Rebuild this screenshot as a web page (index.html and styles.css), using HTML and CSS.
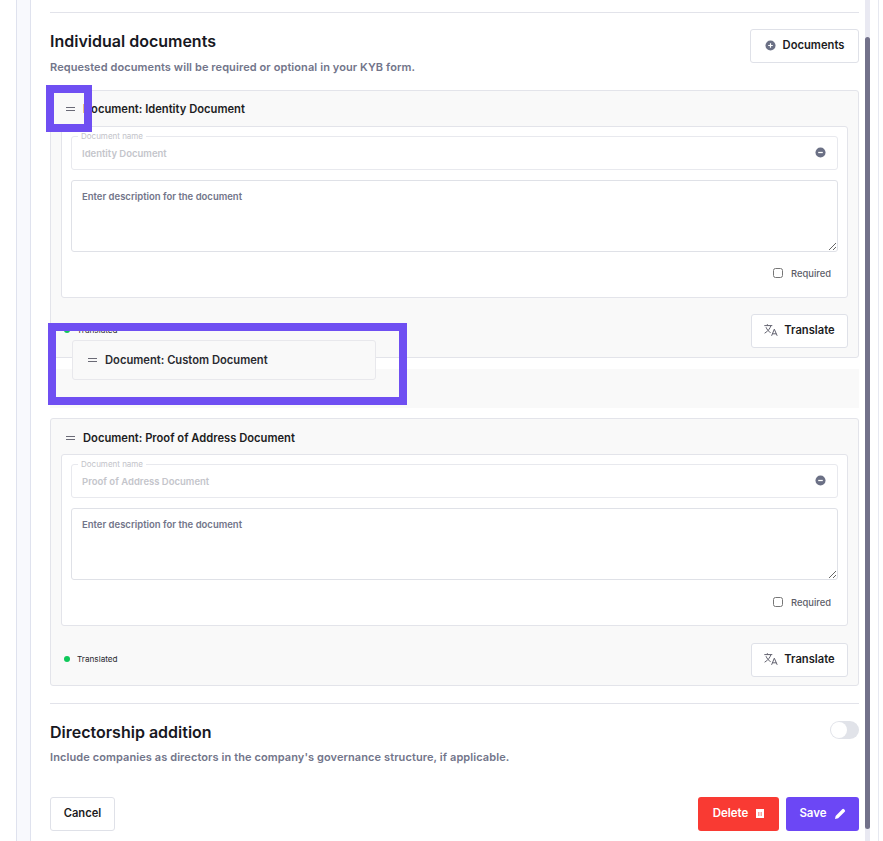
FILE: index.html
```html
<!DOCTYPE html>
<html lang="en">
<head>
<meta charset="utf-8">
<title>Individual documents</title>
<link rel="stylesheet" href="styles.css">
</head>
<body>
<svg class="defs" width="0" height="0" aria-hidden="true">
  <symbol id="i-drag" viewBox="0 0 9 4"><path d="M0 .5h9M0 3.5h9" fill="none" stroke="#6a6a76" stroke-width="1"/></symbol>
  <symbol id="i-minus" viewBox="0 0 12 12"><circle cx="6" cy="6" r="5.5" fill="#6b7085"/><path d="M3.5 6h5" stroke="#fff" stroke-width="1.4"/></symbol>
  <symbol id="i-plus" viewBox="0 0 12 12"><circle cx="6" cy="6" r="5.5" fill="#6b7085"/><path d="M3.5 6h5M6 3.5v5" stroke="#fff" stroke-width="1.3"/></symbol>
  <symbol id="i-translate" viewBox="0 0 14 12"><path d="M.3 1.6h8M3.2 .2l.7 1.4M6.9 1.6C6.3 4.4 3.6 7.6.6 9.2M2 3.2c.9 2.4 2.8 4.4 4.6 5.4" fill="none" stroke="#62626f" stroke-width="1"/><path d="M7.6 11.8 10.3 5.2l2.9 6.6M8.5 9.8h3.8" fill="none" stroke="#62626f" stroke-width="1"/></symbol>
</svg>
<div class="shell">
  <main class="panel">
    <hr class="rule rule-top">
    <section class="head">
      <div>
        <h2 class="title">Individual documents</h2>
        <p class="desc">Requested documents will be required or optional in your KYB form.</p>
      </div>
      <button class="btn btn-docs"><svg class="ico12"><use href="#i-plus"/></svg>Documents</button>
    </section>

    <article class="card">
      <header class="card-head"><svg class="drag"><use href="#i-drag"/></svg><span>Document: Identity Document</span></header>
      <div class="card-body">
        <div class="field">
          <span class="legend">Document name</span>
          <input class="name" value="Identity Document" disabled>
          <svg class="ico12 minus"><use href="#i-minus"/></svg>
        </div>
        <textarea class="note" placeholder="Enter description for the document"></textarea>
        <label class="req"><input type="checkbox" class="check">Required</label>
      </div>
      <footer class="card-foot">
        <span class="status"><i class="dot"></i>Translated</span>
        <button class="btn btn-tr"><svg class="ico-tr"><use href="#i-translate"/></svg>Translate</button>
      </footer>
    </article>

    <div class="slot"></div>

    <article class="card">
      <header class="card-head"><svg class="drag"><use href="#i-drag"/></svg><span>Document: Proof of Address Document</span></header>
      <div class="card-body">
        <div class="field">
          <span class="legend">Document name</span>
          <input class="name" value="Proof of Address Document" disabled>
          <svg class="ico12 minus"><use href="#i-minus"/></svg>
        </div>
        <textarea class="note" placeholder="Enter description for the document"></textarea>
        <label class="req"><input type="checkbox" class="check">Required</label>
      </div>
      <footer class="card-foot">
        <span class="status"><i class="dot"></i>Translated</span>
        <button class="btn btn-tr"><svg class="ico-tr"><use href="#i-translate"/></svg>Translate</button>
      </footer>
    </article>

    <hr class="rule rule-mid">

    <section class="head head-dir">
      <div>
        <h2 class="title">Directorship addition</h2>
        <p class="desc">Include companies as directors in the company's governance structure, if applicable.</p>
      </div>
      <span class="toggle"><i class="knob"></i></span>
    </section>

    <div class="actions">
      <button class="btn btn-cancel">Cancel</button>
      <div class="actions-right">
        <button class="btn btn-solid btn-del">Delete
          <svg class="ico-del" viewBox="0 0 8 9"><rect width="8" height="9" fill="#fff"/><rect x="2" y="3" width="1.5" height="4" fill="#f9a29e"/><rect x="4.5" y="3" width="1.5" height="4" fill="#f9a29e"/></svg>
        </button>
        <button class="btn btn-solid btn-save">Save
          <svg class="ico-pen" viewBox="0 0 12 12"><path d="M0 12l.7-3.4L7.9 1.4a1.4 1.4 0 0 1 2 0l.7.7a1.4 1.4 0 0 1 0 2L3.4 11.3z" fill="#fff"/></svg>
        </button>
      </div>
    </div>
  </main>
</div>

<div class="scroll-track"><div class="scroll-thumb"></div></div>

<div class="drag-item"><svg class="drag"><use href="#i-drag"/></svg><span>Document: Custom Document</span></div>
<div class="mark mark-handle"></div>
<div class="mark mark-item"></div>
</body>
</html>
```
FILE: styles.css
```css
* { box-sizing: border-box; }
html, body { margin: 0; height: 841px; overflow: hidden; background: #fff; }
body { font-family: Inter, "Liberation Sans", sans-serif; color: #1c1c22; }
.defs { position: absolute; }

.shell {
  margin-left: 16px;
  width: 863px;
  height: 841px;
  padding-left: 13px;
  background: #f8f9fd;
  border-left: 1px solid #dfe2ee;
  border-right: 1px solid #e6e8f0;
}
.panel {
  height: 841px;
  padding: 12px 0 0 19px;
  width: 848px;
  background: #fff;
  border-left: 1px solid #dfe2ee;
}
.panel > * { width: 809px; }

.rule { margin: 0; border: 0; border-top: 1px solid #e2e3ea; }

.head { display: flex; justify-content: space-between; align-items: flex-start; margin-top: 16px; }
.title { margin: 0; font-size: 16px; line-height: 24px; font-weight: 600; color: #18181f; }
.desc { margin: 6px 0 0; font-size: 11px; line-height: 16px; font-weight: 600; color: #72758a; letter-spacing: .09px; }

.btn {
  display: inline-flex; align-items: center; justify-content: center;
  font-family: inherit; font-weight: 600; font-size: 11.2px;
  background: #fff; color: #1c1c22;
  border: 1px solid #dfe1e8; border-radius: 3px; padding: 0 0 2px;
}
.btn-docs { width: 109px; height: 34px; gap: 7px; }
.ico12 { width: 11px; height: 11px; }

.card {
  height: 268px;
  padding: 0 10px 0 10px;
  background: #f9f9f9;
  border: 1px solid #e3e4ea;
  border-radius: 3px;
}
.head + .card { margin-top: 15px; }
.card-head {
  display: flex; align-items: center; gap: 8px;
  height: 35px; padding: 1px 5px 0 5px;
  font-size: 11.2px; font-weight: 600; color: #1c1c22;
}
.drag { width: 9px; height: 4px; margin-bottom: 1px; }

.card-body {
  height: 172px;
  padding: 9px 9px 0;
  background: #fff;
  border: 1px solid #e3e4ea;
  border-radius: 3px;
}
.field { position: relative; height: 34px; }
.legend {
  position: absolute; left: 7px; top: -5px; padding: 0 3px;
  font-size: 8px; line-height: 11px; color: #c2c3c9; background: #fff;
}
.name {
  display: block; width: 100%; height: 34px; padding: 0 10px;
  font-family: inherit; font-size: 9.5px; font-weight: 600; color: #c4c5cb;
  background: #fff; border: 1px solid #e8e9ee; border-radius: 3px;
  -webkit-text-fill-color: #c4c5cb; opacity: 1;
}
.minus { position: absolute; right: 12px; top: 11px; }
.note {
  display: block; width: 100%; height: 72px; margin-top: 10px; padding: 10px;
  font-family: inherit; font-size: 9.5px; font-weight: 600; line-height: 12px;
  background: #fff; border: 1px solid #dfe1e7; border-radius: 3px; resize: vertical;
}
.note::placeholder { color: #72758a; opacity: 1; }
.req {
  display: flex; justify-content: flex-end; align-items: center; gap: 8px;
  margin-top: 15px; padding-right: 7px; height: 12px;
  font-size: 9.4px; font-weight: 500; color: #5c5d68;
}
.check { width: 10px; height: 10px; margin: 0; }

.card-foot { display: flex; justify-content: space-between; align-items: center; height: 34px; margin-top: 16px; padding-left: 3px; }
.status { display: flex; align-items: center; gap: 7px; padding-bottom: 2px; font-size: 8.2px; color: #2a2a30; }
.dot { width: 6px; height: 6px; border-radius: 50%; background: #0fc85a; }
.btn-tr { width: 97px; height: 34px; gap: 6px; }
.ico-tr { width: 14px; height: 12px; }

.slot { height: 39px; margin-top: 11px; background: #f9f9f9; }
.slot + .card { margin-top: 10px; }
.slot + .card .card-head { padding-top: 3px; }
.slot + .card .req { margin-top: 16px; }
.slot + .card .card-foot { margin-top: 17px; }

.rule-mid { margin-top: 17px; }
.head-dir { margin-top: 16px; }
.head-dir .desc { margin-top: 5px; }

.toggle {
  position: relative; display: block; width: 29px; height: 18px; margin-top: 1px;
  border-radius: 9px; background: #e1e3e9;
}
.knob { position: absolute; left: 1px; top: 1px; width: 16px; height: 16px; border-radius: 50%; background: #fff; }

.actions { display: flex; justify-content: space-between; margin-top: 32px; }
.actions-right { display: flex; gap: 7px; }
.btn-cancel { width: 65px; height: 34px; }
.btn-solid { height: 34px; color: #fff; border: 0; gap: 8px; font-size: 11.5px; }
.btn-del { width: 81px; background: #f93a33; }
.btn-save { width: 73px; background: #6c47f5; }
.ico-del { width: 8px; height: 9px; }
.ico-pen { width: 11px; height: 11px; }

.scroll-track { position: absolute; left: 865px; top: 0; width: 5px; height: 841px; background: #e9e9f2; }
.scroll-thumb { position: absolute; left: 0; top: 37px; width: 5px; height: 792px; border-radius: 3px; background: #72718a; }

.drag-item {
  position: absolute; left: 72px; top: 340px; width: 304px; height: 40px;
  display: flex; align-items: center; gap: 8px; padding-left: 15px;
  font-size: 11.2px; font-weight: 600; color: #2a2a30;
  background: #f9f9f9; border: 1px solid #e8e8ec; border-radius: 3px;
}
.mark { position: absolute; border: 8px solid #6f4ff2; }
.mark-handle { left: 46px; top: 85px; width: 46px; height: 47px; }
.mark-item { left: 48px; top: 323px; width: 359px; height: 82px; }
```
